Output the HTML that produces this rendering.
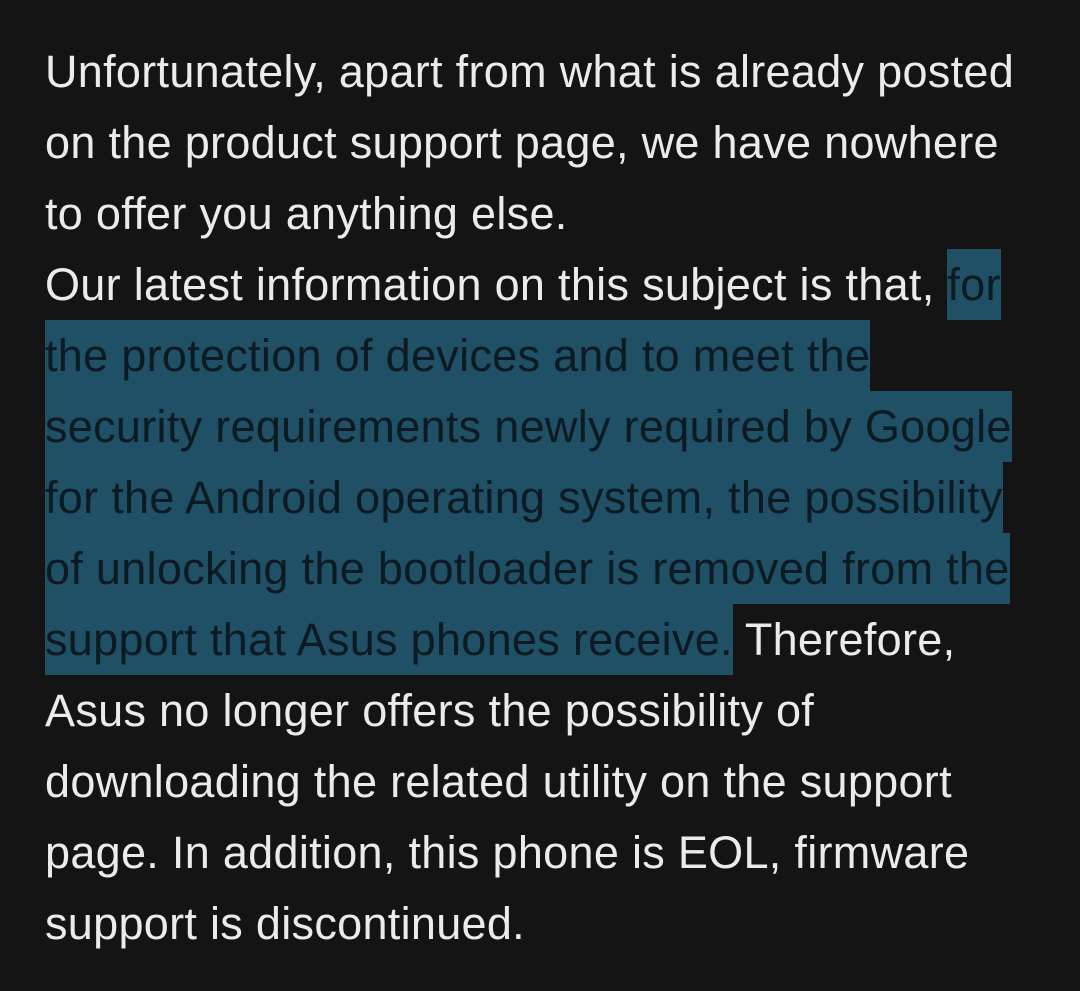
<!DOCTYPE html>
<html><head><meta charset="utf-8"><style>
html,body{margin:0;padding:0;background:#141414;width:1080px;height:991px;overflow:hidden}
.w{position:absolute;left:45px;top:36px;font-family:"Liberation Sans",sans-serif;font-size:45px;letter-spacing:0.3px;color:#ebebeb}
.l{height:71px;line-height:71px;white-space:nowrap}
.h{display:inline-block;height:71px;background:#1f5066;color:#0c1a22}
</style></head><body><div class="w">
<div class="l">Unfortunately, apart from what is already posted</div>
<div class="l">on the product support page, we have nowhere</div>
<div class="l">to offer you anything else.</div>
<div class="l">Our latest information on this subject is that, <span class="h">for</span></div>
<div class="l"><span class="h">the protection of devices and to meet the</span></div>
<div class="l"><span class="h">security requirements newly required by Google</span></div>
<div class="l"><span class="h">for the Android operating system, the possibility</span></div>
<div class="l"><span class="h">of unlocking the bootloader is removed from the</span></div>
<div class="l"><span class="h">support that Asus phones receive.</span> Therefore,</div>
<div class="l">Asus no longer offers the possibility of</div>
<div class="l">downloading the related utility on the support</div>
<div class="l">page. In addition, this phone is EOL, firmware</div>
<div class="l">support is discontinued.</div>
</div></body></html>
